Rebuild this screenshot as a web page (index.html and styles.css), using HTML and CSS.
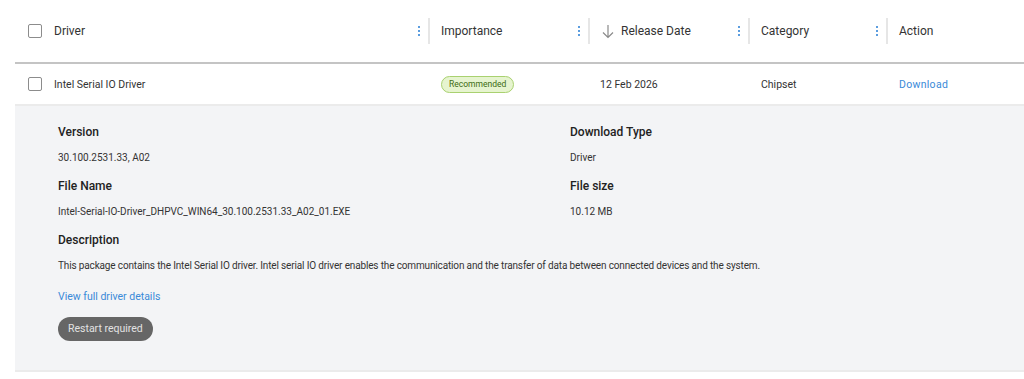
FILE: index.html
```html
<!DOCTYPE html>
<html lang="en">
<head>
    <meta charset="UTF-8">
    <title>Drivers &amp; Downloads</title>
    <link rel="stylesheet" href="styles.css">
</head>
<body>

    <!-- Driver table -->
    <div class="driver-table">
        <!-- Header -->
        <div class="table-row table-head">
            <div class="cell cell-check"><span class="checkbox"></span></div>
            <div class="cell cell-driver">
                <span>Driver</span>
                <span class="kebab"><i></i><i></i><i></i></span>
            </div>
            <div class="cell cell-sep">
                <span>Importance</span>
                <span class="kebab"><i></i><i></i><i></i></span>
            </div>
            <div class="cell cell-sep cell-date">
                <svg class="sort-arrow" width="12" height="15" viewBox="0 0 12 15">
                    <path d="M6 1v12.5M1 8.5l5 5 5-5" fill="none" stroke="#8a8a8a" stroke-width="1.2"/>
                </svg>
                <span>Release Date</span>
                <span class="kebab"><i></i><i></i><i></i></span>
            </div>
            <div class="cell cell-sep">
                <span>Category</span>
                <span class="kebab"><i></i><i></i><i></i></span>
            </div>
            <div class="cell cell-sep">
                <span>Action</span>
            </div>
        </div>

        <!-- Driver row -->
        <div class="table-row table-body">
            <div class="cell cell-check"><span class="checkbox"></span></div>
            <div class="cell cell-driver">Intel Serial IO Driver</div>
            <div class="cell cell-pad"><span class="badge">Recommended</span></div>
            <div class="cell cell-pad cell-date-val">12 Feb 2026</div>
            <div class="cell cell-pad">Chipset</div>
            <div class="cell cell-pad"><a href="#" class="link link-download">Download</a></div>
        </div>

        <!-- Expanded details -->
        <div class="details">
            <div class="details-grid">
                <div class="field">
                    <h4>Version</h4>
                    <p>30.100.2531.33, A02</p>
                </div>
                <div class="field">
                    <h4>Download Type</h4>
                    <p>Driver</p>
                </div>
                <div class="field">
                    <h4>File Name</h4>
                    <p>Intel-Serial-IO-Driver_DHPVC_WIN64_30.100.2531.33_A02_01.EXE</p>
                </div>
                <div class="field">
                    <h4>File size</h4>
                    <p>10.12 MB</p>
                </div>
            </div>
            <div class="field">
                <h4>Description</h4>
                <p class="desc">This package contains the Intel Serial IO driver. Intel serial IO driver enables the communication and the transfer of data between connected devices and the system.</p>
            </div>
            <a href="#" class="link details-link">View full driver details</a>
            <span class="pill">Restart required</span>
        </div>
    </div>

</body>
</html>
```

FILE: styles.css
```css
/* General Styles */
body {
    font-family: Roboto, 'Liberation Sans', sans-serif;
    background-color: #ffffff;
    color: #333;
    margin: 0;
    padding: 0;
}

/* Table */
.driver-table {
    margin-left: 15px;
}

.table-row {
    display: grid;
    grid-template-columns: 39px 374px 160px 160px 138px 1fr;
    align-items: center;
}

.table-head {
    height: 62px;
    border-bottom: 2px solid #c4c4c4;
    font-size: 12px;
    color: #333;
}

.table-body {
    height: 40px;
    border-bottom: 2px solid #ebebeb;
    font-size: 10.5px;
    color: #333;
}

.cell {
    display: flex;
    align-items: center;
    min-width: 0;
}

.cell-check {
    padding-left: 13px;
}

.checkbox {
    display: block;
    width: 12px;
    height: 12px;
    border: 1px solid #8c8c8c;
    border-radius: 2px;
    background: #fff;
}

.cell-driver {
    padding-right: 8px;
}

.cell-sep {
    height: 26px;
    border-left: 2px solid #e6e6e6;
    padding-left: 11px;
    padding-right: 8px;
}

.cell-pad {
    padding-left: 13px;
}

.cell-date {
    padding-left: 12px;
}

.cell-date-val {
    padding-left: 12px;
}

.sort-arrow {
    margin-right: 7px;
}

/* Kebab (three dots) */
.kebab {
    margin-left: auto;
    display: flex;
    flex-direction: column;
    gap: 2px;
}

.kebab i {
    display: block;
    width: 2px;
    height: 2px;
    background: #5b9ddf;
}

/* Badge */
.badge {
    display: inline-block;
    padding: 2px 7px;
    font-size: 8.5px;
    color: #3c6b12;
    background: #e6f4cf;
    border: 1px solid #a9d170;
    border-radius: 9px;
    line-height: 11px;
}

.link {
    color: #3a8ad8;
    text-decoration: none;
}

.link-download {
    letter-spacing: 0.3px;
}

/* Details panel */
.details {
    background: #f3f4f6;
    border-bottom: 2px solid #ebebeb;
    padding: 18px 0 29px 43px;
    display: flex;
    flex-direction: column;
    align-items: flex-start;
}

.details-grid {
    display: grid;
    grid-template-columns: 512px 1fr;
    width: 100%;
}

.field h4 {
    margin: 0;
    font-size: 12px;
    font-weight: 500;
    color: #222;
    line-height: 16px;
}

.field p {
    margin: 11px 0 14px;
    font-size: 10px;
    color: #333;
    line-height: 13px;
}

.field .desc {
    letter-spacing: -0.15px;
}

.details-link {
    font-size: 10.5px;
    margin-top: 4px;
    line-height: 14px;
}

.pill {
    margin-top: 13px;
    padding: 0 10px;
    height: 24px;
    line-height: 24px;
    border-radius: 12px;
    background: #666;
    color: #e2e2e2;
    font-size: 10.5px;
}
```
